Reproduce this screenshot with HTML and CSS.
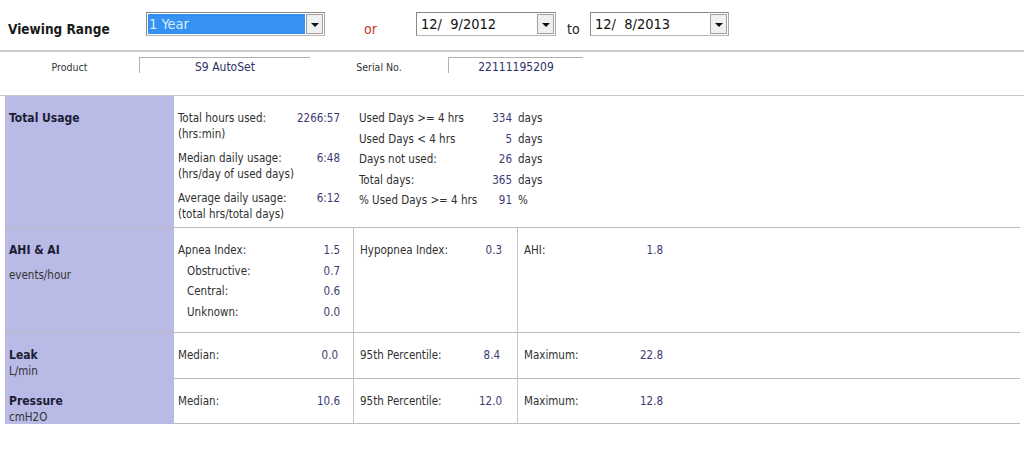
FILE: index.html
```html
<!DOCTYPE html>
<html lang="en">
<head>
	<meta charset="UTF-8">
	<title>Compliance Report</title>
	<link rel="stylesheet" href="styles.css">
</head>
<body>
	<div class="toolbar">
		<span class="range-label">Viewing Range</span>
		<div class="combo combo-range">
			<span class="combo-value selected">1 Year</span>
			<span class="combo-btn"></span>
		</div>
		<span class="or">or</span>
		<div class="combo combo-date">
			<span class="combo-value">12/&nbsp; 9/2012</span>
			<span class="combo-btn"></span>
		</div>
		<span class="to">to</span>
		<div class="combo combo-date combo-end">
			<span class="combo-value">12/&nbsp; 8/2013</span>
			<span class="combo-btn"></span>
		</div>
	</div>

	<div class="device">
		<span class="device-label product">Product</span>
		<span class="device-field product-field">S9 AutoSet</span>
		<span class="device-label serial">Serial No.</span>
		<span class="device-field serial-field">22111195209</span>
	</div>

	<div class="report">
		<!-- total usage -->
		<div class="row row-usage">
			<div class="head"><div class="title">Total Usage</div></div>
			<div class="cell usage">
				<div class="stat"><span>Total hours used:<br>(hrs:min)</span><span class="val">2266:57</span></div>
				<div class="stat"><span>Median daily usage:<br>(hrs/day of used days)</span><span class="val">6:48</span></div>
				<div class="stat"><span>Average daily usage:<br>(total hrs/total days)</span><span class="val">6:12</span></div>
			</div>
			<div class="cell days">
				<span>Used Days &gt;= 4 hrs</span><span class="val">334</span><span class="unit">days</span>
				<span>Used Days &lt; 4 hrs</span><span class="val">5</span><span class="unit">days</span>
				<span>Days not used:</span><span class="val">26</span><span class="unit">days</span>
				<span>Total days:</span><span class="val">365</span><span class="unit">days</span>
				<span>% Used Days &gt;= 4 hrs</span><span class="val">91</span><span class="unit">%</span>
			</div>
		</div>

		<!-- ahi -->
		<div class="row row-ahi">
			<div class="head"><div class="title">AHI &amp; AI</div><div class="sub sub-gap">events/hour</div></div>
			<div class="cell col-a">
				<div class="line"><span>Apnea Index:</span><span class="val">1.5</span></div>
				<div class="line indent"><span>Obstructive:</span><span class="val">0.7</span></div>
				<div class="line indent"><span>Central:</span><span class="val">0.6</span></div>
				<div class="line indent"><span>Unknown:</span><span class="val">0.0</span></div>
			</div>
			<div class="cell col-b">
				<div class="line"><span>Hypopnea Index:</span><span class="val">0.3</span></div>
			</div>
			<div class="cell col-c">
				<div class="line"><span>AHI:</span><span class="val">1.8</span></div>
			</div>
		</div>

		<!-- leak -->
		<div class="row row-leak">
			<div class="head"><div class="title">Leak</div><div class="sub">L/min</div></div>
			<div class="cell col-a">
				<div class="line"><span>Median:</span><span class="val nudge">0.0</span></div>
			</div>
			<div class="cell col-b">
				<div class="line"><span>95th Percentile:</span><span class="val nudge">8.4</span></div>
			</div>
			<div class="cell col-c">
				<div class="line"><span>Maximum:</span><span class="val">22.8</span></div>
			</div>
		</div>

		<!-- pressure -->
		<div class="row row-pressure">
			<div class="head"><div class="title">Pressure</div><div class="sub">cmH2O</div></div>
			<div class="cell col-a">
				<div class="line"><span>Median:</span><span class="val">10.6</span></div>
			</div>
			<div class="cell col-b">
				<div class="line"><span>95th Percentile:</span><span class="val">12.0</span></div>
			</div>
			<div class="cell col-c">
				<div class="line"><span>Maximum:</span><span class="val">12.8</span></div>
			</div>
		</div>
	</div>
</body>
</html>
```

FILE: styles.css
```css
*{margin:0;padding:0;box-sizing:border-box;}
body{
	background: #fff;
	font-family: "DejaVu Sans Condensed", "Liberation Sans", sans-serif;
	font-size: 11.5px;
	color: #303030;
}

/* top bar */
.toolbar{
	display: flex;
	align-items: center;
	height: 52px;
	border-bottom: 2px solid #cdcdcd;
	padding-left: 8px;
}
.range-label{
	width: 138px;
	font-size: 13.5px;
	font-weight: bold;
	color: #1a1a1a;
	margin-top: 8px;
}
.combo{
	display: flex;
	height: 24px;
	border: 1px solid #8a8a8a;
	border-right-color: #a8a8a8;
	border-bottom-color: #b8b8b8;
	background: #fff;
	padding: 1px;
	margin-top: -2px;
}
.combo-range{width: 179px;}
.combo-date{width: 140px;}
.combo-end{width: 139px;}
.combo-value{
	flex: 1;
	font-size: 14.5px;
	line-height: 20px;
	padding-left: 3px;
	color: #111;
}
.combo-value.selected{
	background: #3592f2;
	color: #d8ecff;
	padding-left: 1px;
	margin-right: 1px;
}
.combo-btn{
	width: 17px;
	background: #f0f0f0;
	border: 1px solid #a0a0a0;
	position: relative;
}
.combo-btn:after{
	content: "";
	position: absolute;
	left: 4px;
	top: 8px;
	border-left: 4px solid transparent;
	border-right: 4px solid transparent;
	border-top: 4px solid #111;
}
.or{
	width: 52px;
	margin-left: 39px;
	font-size: 14px;
	color: #c0392b;
	margin-top: 8px;
}
.to{
	width: 34px;
	padding-left: 11px;
	font-size: 14px;
	color: #222;
	margin-top: 8px;
}

/* device row */
.device{
	display: flex;
	align-items: flex-start;
	height: 44px;
	padding-top: 5px;
	border-bottom: 1px solid #c8c8c8;
}
.device-label{
	font-size: 10.5px;
	line-height: 16px;
	padding-top: 2px;
	text-align: center;
	color: #333;
}
.product{width: 139px;}
.serial{width: 138px;}
.device-field{
	height: 16px;
	border-top: 1px solid #b0b0b0;
	border-left: 1px solid #b0b0b0;
	line-height: 16px;
	padding-top: 1px;
	text-align: center;
	font-size: 12px;
	color: #2f2f66;
}
.product-field{width: 171px;}
.serial-field{width: 135px;}

/* report grid */
.report{
	margin-left: 5px;
	width: 1015px;
}
.row{
	display: grid;
	grid-template-columns: 169px 179px 164px 1fr;
	border-bottom: 1px solid #bcbcbc;
}
.row-usage{height: 132px;}
.row-ahi{height: 105px;}
.row-leak{height: 46px;}
.row-pressure{height: 45px;}
.head{
	background: #b9bae5;
	padding: 14px 0 0 4px;
	line-height: 16px;
}
.title{
	font-weight: bold;
	font-size: 12px;
	color: #1c1c36;
}
.sub{color: #333;}
.sub-gap{margin-top: 9px;}
.cell{
	line-height: 20.5px;
	padding-top: 12px;
}
.row-ahi .cell, .row-leak .cell, .row-pressure .cell{
	border-left: 1px solid #c4c4c4;
}
.row-ahi .col-a, .row-leak .col-a, .row-pressure .col-a{border-left: none;}
.val{color: #3b3b75;}

/* total usage */
.usage{
	padding: 14px 13px 0 4px;
	line-height: 16px;
}
.stat{
	display: flex;
	justify-content: space-between;
}
.stat + .stat{margin-top: 8px;}
.days{
	grid-column: 3 / 5;
	display: grid;
	grid-template-columns: 127px 26px auto;
	align-content: start;
	padding-left: 6px;
}
.days .val{text-align: right;}
.unit{padding-left: 6px;}

/* index rows */
.line{
	display: flex;
	justify-content: space-between;
}
.indent{padding-left: 9px;}
.col-a{padding-left: 4px; padding-right: 13px;}
.col-b{padding-left: 6px; padding-right: 15px;}
.col-c{padding-left: 6px;}
.col-c .line{width: 139px;}
.nudge{margin-right: 2px;}
```
